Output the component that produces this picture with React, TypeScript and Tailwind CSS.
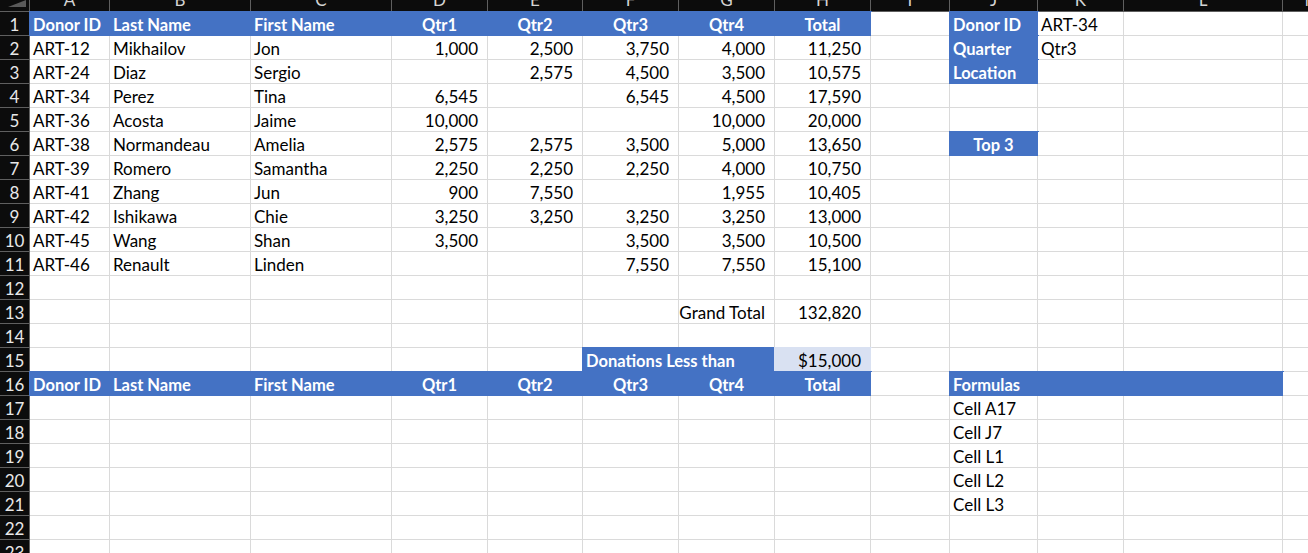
import React from 'react';

type Fill = 'blue' | 'light';
type Cell = { t?: string; fill?: Fill; align?: 'l' | 'c' | 'r'; w?: string; span?: number };

const W = [
  'w-[80px]', 'w-[141px]', 'w-[141px]', 'w-[96px]', 'w-[95px]', 'w-[96px]', 'w-[96px]',
  'w-[96px]', 'w-[79px]', 'w-[88px]', 'w-[86px]', 'w-[159px]', 'w-[60px]',
];
const LETTERS = ['A', 'B', 'C', 'D', 'E', 'F', 'G', 'H', 'I', 'J', 'K', 'L', 'M'];

const hdr = (t: string, align: 'l' | 'c' = 'c'): Cell => ({ t, fill: 'blue', align });
const num = (t: string): Cell => ({ t, align: 'r' });
const txt = (t: string): Cell => ({ t, align: 'l' });

const tableHead = {
  A: hdr('Donor ID', 'l'), B: hdr('Last Name', 'l'), C: hdr('First Name', 'l'),
  D: hdr('Qtr1'), E: hdr('Qtr2'), F: hdr('Qtr3'), G: hdr('Qtr4'), H: hdr('Total'),
};

const donors = [
  ['ART-12', 'Mikhailov', 'Jon', '1,000', '2,500', '3,750', '4,000', '11,250'],
  ['ART-24', 'Diaz', 'Sergio', '', '2,575', '4,500', '3,500', '10,575'],
  ['ART-34', 'Perez', 'Tina', '6,545', '', '6,545', '4,500', '17,590'],
  ['ART-36', 'Acosta', 'Jaime', '10,000', '', '', '10,000', '20,000'],
  ['ART-38', 'Normandeau', 'Amelia', '2,575', '2,575', '3,500', '5,000', '13,650'],
  ['ART-39', 'Romero', 'Samantha', '2,250', '2,250', '2,250', '4,000', '10,750'],
  ['ART-41', 'Zhang', 'Jun', '900', '7,550', '', '1,955', '10,405'],
  ['ART-42', 'Ishikawa', 'Chie', '3,250', '3,250', '3,250', '3,250', '13,000'],
  ['ART-45', 'Wang', 'Shan', '3,500', '', '3,500', '3,500', '10,500'],
  ['ART-46', 'Renault', 'Linden', '', '', '7,550', '7,550', '15,100'],
];

const side: Record<number, Record<string, Cell>> = {
  1: { J: hdr('Donor ID', 'l'), K: txt('ART-34') },
  2: { J: hdr('Quarter', 'l'), K: txt('Qtr3') },
  3: { J: hdr('Location', 'l') },
  6: { J: hdr('Top 3') },
};

const rows: Record<string, Cell>[] = [];
rows.push({ ...tableHead, ...side[1] });
donors.forEach((d, i) => {
  const r: Record<string, Cell> = {
    A: txt(d[0]), B: txt(d[1]), C: txt(d[2]),
    D: num(d[3]), E: num(d[4]), F: num(d[5]), G: num(d[6]), H: num(d[7]),
  };
  rows.push({ ...r, ...(side[i + 2] || {}) });
});
rows.push({});
rows.push({ G: { t: 'Grand Total', align: 'r' }, H: num('132,820') });
rows.push({});
rows.push({
  F: { t: 'Donations Less than', fill: 'blue', align: 'l', w: 'w-[192px]', span: 2 },
  H: { t: '$15,000', fill: 'light', align: 'r' },
});
rows.push({ ...tableHead, J: { t: 'Formulas', fill: 'blue', align: 'l', w: 'w-[333px]', span: 3 } });
['Cell A17', 'Cell J7', 'Cell L1', 'Cell L2', 'Cell L3'].forEach((t) => rows.push({ J: txt(t) }));
rows.push({});
rows.push({});

function GridCell({ cell, w }: { cell?: Cell; w: string }) {
  const fill =
    cell?.fill === 'blue'
      ? 'bg-[#4472c4] border-[#4472c4] shadow-[0_0_0_1px_#4472c4] text-white font-bold text-[16.5px]'
      : cell?.fill === 'light'
        ? 'bg-[#d9e1f2] border-[#d9e1f2] shadow-[0_0_0_1px_#d9e1f2] text-black'
        : 'bg-white border-[#dadada] text-black';
  const align =
    cell?.align === 'r' ? 'justify-end pr-[9px]' : cell?.align === 'c' ? 'justify-center' : 'justify-start pl-[3px]';
  return (
    <div className={`${cell?.w ?? w} shrink-0 h-[24px] pt-[3px] border-r border-b flex items-center overflow-hidden whitespace-nowrap ${fill} ${align}`}>
      {cell?.t}
    </div>
  );
}

function SheetRow({ n, cells }: { n: number; cells: Record<string, Cell> }) {
  const out: React.ReactNode[] = [];
  for (let i = 0; i < LETTERS.length; i++) {
    const cell = cells[LETTERS[i]];
    out.push(<GridCell key={i} cell={cell} w={W[i]} />);
    if (cell?.span) i += cell.span - 1;
  }
  return (
    <div className="flex">
      <div className="w-[30px] shrink-0 h-[24px] pt-[3px] border-r border-b border-[#5f5f5f] bg-[#0c0c0c] text-[#e8e8e8] flex items-center justify-center">
        {n}
      </div>
      {out}
    </div>
  );
}

export default function App() {
  return (
    <div className="w-[1308px] h-[553px] overflow-hidden bg-white font-['Lato',sans-serif] text-[17px] leading-[20px]">
      {/* column letters, top half scrolled out of view */}
      <div className="flex h-[12px]">
        <div className="w-[30px] shrink-0 h-[12px] border-r border-b border-[#5f5f5f] bg-[#0c0c0c] flex justify-end items-start">
          <svg width="18" height="7" viewBox="0 0 18 7" className="mr-[3px]">
            <polygon points="0,7 18,7 18,0" fill="#5a5a5a" />
          </svg>
        </div>
        {LETTERS.map((l, i) => (
          <div
            key={l}
            className={`${W[i]} shrink-0 h-[12px] border-r border-b border-[#5f5f5f] bg-[#0c0c0c] text-[#d4d4d4] flex justify-center items-start overflow-hidden`}
          >
            <span className="leading-none -mt-[9px]">{l}</span>
          </div>
        ))}
      </div>
      {rows.map((r, i) => (
        <SheetRow key={i} n={i + 1} cells={r} />
      ))}
    </div>
  );
}
